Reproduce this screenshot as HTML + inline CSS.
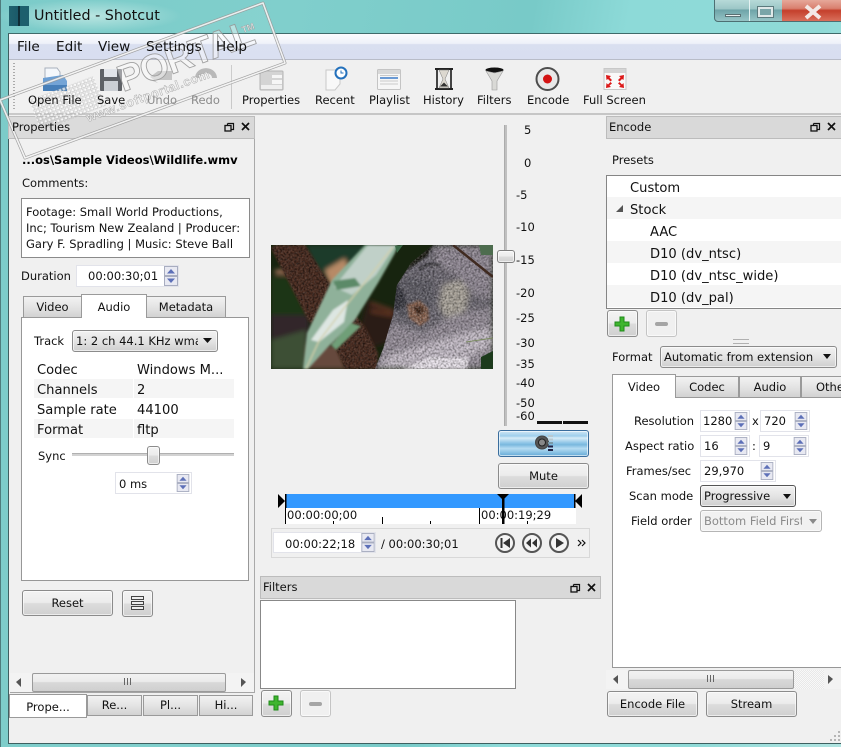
<!DOCTYPE html>
<html><head><meta charset="utf-8"><title>Untitled - Shotcut</title>
<style>
html,body{margin:0;padding:0}
body{width:841px;height:747px;overflow:hidden;position:relative;background:#88d6d3;font:11.5px "DejaVu Sans","Liberation Sans",sans-serif;color:#111}
#glass{position:absolute;left:0;top:0;width:841px;height:747px;background:linear-gradient(100deg,#7ccbc9 0,#80cfcc 30%,#78cac8 55%,#8ddad8 65%,#8fdad7 85%,#b0e4e1 100%)}
#client{position:absolute;left:8px;top:33px;width:840px;height:711px;background:#f0f0f0;border-top:1px solid #3f6b6b;border-left:1px solid #3f5f60;border-bottom:1px solid #3d6060;box-sizing:border-box}
.a,.t,.b,.field,.row{position:absolute}
.t{white-space:nowrap;line-height:16px;height:16px}
.top{z-index:5}
.m{font-size:13.1px}
.g{color:#8a8a8a}
.b{box-sizing:border-box;border:1px solid #8b8b8b;border-radius:3px;background:linear-gradient(#f3f3f3 0,#ececec 48%,#dcdcdc 52%,#d0d0d0 100%);box-shadow:inset 0 0 0 1px rgba(255,255,255,.6);text-align:center}
.off{background:#f0f0f0;border-color:#c4c4c4}
.field{box-sizing:border-box;background:#fff;border:1px solid #e2e3ea}
.dock{position:absolute;box-sizing:border-box;height:23px;background:#d9d9d9;border:1px solid #bcbcbc}
.tab{position:absolute;box-sizing:border-box;border:1px solid #9a9a9a;background:linear-gradient(#f2f2f2,#e4e4e4 50%,#d2d2d2);text-align:center}
.on{background:#fff;border-bottom:none;z-index:2}
.pane{position:absolute;box-sizing:border-box;background:#fff;border:1px solid #979797}
.row{background:#f5f5f5}
.sb{position:absolute;height:19px;background:#f3f3f3}
.th{position:absolute;box-sizing:border-box;height:19px;border:1px solid #9a9a9a;border-radius:2px;background:linear-gradient(#f2f2f2,#ebebeb 45%,#d8d8d8 50%,#cfcfcf)}
svg{position:absolute;overflow:visible}
</style></head><body>
<div id="glass"></div>
<div class="a" style="left:0;top:0;width:1px;height:747px;background:#4f7c7d"></div>
<svg width="0" height="0" style="left:0;top:0"><defs>
<symbol id="spin" viewBox="0 0 14 20"><rect x=".5" y=".5" width="13" height="9" fill="#e8e9f2" stroke="#a8adc0"/><rect x=".5" y="10.500" width="13" height="9" fill="#e8e9f2" stroke="#a8adc0"/><path d="M3 7.500L7 3l4 4.500z" fill="#5d70b8"/><path d="M3 12.500h8l-4 4.500z" fill="#5d70b8"/></symbol>
<symbol id="dock" viewBox="0 0 26 12"><path d="M3.500 2.500h6v6h-2M3.500 2.500v2" fill="none" stroke="#111" stroke-width="1.200"/><rect x="1" y="4.500" width="6" height="5.500" fill="none" stroke="#111" stroke-width="1.300"/><path d="M18 2l7 7M25 2l-7 7" stroke="#111" stroke-width="1.700"/></symbol>
<symbol id="plus" viewBox="0 0 16 16"><path d="M6 1h4v5h5v4h-5v5H6v-5H1V6h5z" fill="#3fb52f" stroke="#1f8a1a"/></symbol>
</defs></svg>

<!-- title bar -->
<div class="a" style="left:0;top:0;height:32px;background:radial-gradient(ellipse at 50% 50%,rgba(225,245,240,.6),rgba(200,240,235,0) 72%);width:180px"></div>
<div class="a" style="left:9px;top:6px;width:20px;height:20px;background:linear-gradient(90deg,#20626f 0,#1b5a69 45%,#0f2d36 45%,#0f2d36 55%,#1d5f6d 55%)"></div>
<div class="t" style="left:34px;top:8px;font-size:14.300px;color:#111">Untitled - Shotcut</div>
<div class="a" style="left:714px;top:-2px;width:140px;height:24px;box-sizing:border-box;border:1px solid #4d6f72;border-radius:0 0 4px 4px;background:linear-gradient(#b9dcda 0,#9cc6c6 45%,#6ea4a8 50%,#96c5c6 100%)"></div>
<div class="a" style="left:749px;top:0;width:1px;height:21px;background:#e5f2f2"></div>
<div class="a" style="left:782px;top:0;width:59px;height:21px;background:linear-gradient(#e6a89a 0,#d9806f 40%,#c43f2b 50%,#d96f5b 100%)"></div>
<div class="a" style="left:725px;top:14px;width:16px;height:3px;background:#e8f0f0;border:1px solid #596f72;box-sizing:border-box"></div>
<div class="a" style="left:758px;top:7px;width:15px;height:10px;box-sizing:border-box;border:2px solid #dfe8e8;outline:1px solid #5c7a7d;background:#7aa5a8"></div>
<svg style="left:804px;top:5px" width="18" height="14"><path d="M2 1l14 12M16 1L2 13" stroke="#f3e9e6" stroke-width="4"/></svg>

<div id="client"></div>
<!-- menu -->
<div class="a" style="left:9px;top:34px;width:832px;height:26px;background:linear-gradient(#fbfcfe 0,#eef1f9 38%,#d9dff0 42%,#d8def0 100%);border-bottom:1px solid #b8bcc8;box-sizing:border-box"></div>
<div class="t top" style="left:17px;top:39px;font-size:13.600px">File</div>
<div class="t top" style="left:56px;top:39px;font-size:13.600px">Edit</div>
<div class="t top" style="left:98px;top:39px;font-size:13.600px">View</div>
<div class="t top" style="left:146px;top:39px;font-size:13.600px">Settings</div>
<div class="t top" style="left:216px;top:39px;font-size:13.600px">Help</div>

<!-- toolbar -->
<div class="a" style="left:13px;top:63px;width:2px;height:48px;background:repeating-linear-gradient(#aaa 0,#aaa 1px,transparent 1px,transparent 3px)"></div>
<div class="a" style="left:231px;top:65px;width:1px;height:44px;background:#c9c9c9"></div>
<div class="a" style="left:9px;top:113px;width:832px;height:2px;background:#c6c6c6"></div>
<div class="t top" style="left:28px;top:92px">Open File</div>
<div class="t top" style="left:97px;top:92px">Save</div>
<div class="t g top" style="left:147px;top:92px">Undo</div>
<div class="t g top" style="left:191px;top:92px">Redo</div>
<div class="t top" style="left:242px;top:92px">Properties</div>
<div class="t" style="left:315px;top:92px">Recent</div>
<div class="t" style="left:369px;top:92px">Playlist</div>
<div class="t" style="left:423px;top:92px">History</div>
<div class="t" style="left:477px;top:92px">Filters</div>
<div class="t" style="left:527px;top:92px">Encode</div>
<div class="t" style="left:583px;top:92px">Full Screen</div>
<!-- toolbar icons -->
<svg style="left:0;top:0" width="841" height="115">
 <path d="M45 68h12l3 4v6H45z" fill="#f4f7fb" stroke="#a8b0bc"/><path d="M43 78l20-3 4 6v10H43z" fill="#6c9fd4"/><path d="M43 85h24v6H43z" fill="#3d78b5"/>
 <rect x="100" y="69" width="22" height="22" fill="#55585e" rx="1"/><rect x="104" y="69" width="13" height="8" fill="#dfe2e8"/><rect x="104" y="81" width="14" height="10" fill="#c8ccd2"/>
 <path d="M150 80h22v-9h-14l-8 6 8 6z" fill="#c2c2c2"/><path d="M195 78a10 9 0 0 1 22 0h-5a6 5 0 0 0-12 0z" fill="#b5b5b5"/>
 <rect x="260" y="71" width="23" height="19" rx="1" fill="#d4d4d4" stroke="#b5b5b5"/><rect x="272" y="75" width="10" height="3" fill="#f6f6f6"/><rect x="272" y="80" width="10" height="4" fill="#f6f6f6"/><rect x="261" y="85" width="21" height="4" fill="#efefef"/>
 <path d="M326 70h14v14l-5 6h-9z" fill="#f8f8f8" stroke="#c8c8c8"/><circle cx="341" cy="73" r="5.500" fill="#fff" stroke="#2471bc" stroke-width="2"/><path d="M341 70.500V73h2.500" fill="none" stroke="#2471bc"/>
 <rect x="377.500" y="69.500" width="23" height="20" rx="1" fill="#f6f6f6" stroke="#c4c4c4"/><rect x="378" y="70" width="22" height="4" fill="#d8d8d8"/><path d="M380 78h18" stroke="#3d7cc8" stroke-width="1.500"/><path d="M380 75.500h18M380 81h18M380 84h18" stroke="#c9c9c9"/>
 <path d="M435 68h18v2h-18zM435 88h18v2h-18z" fill="#222"/><path d="M436 70h2v18h-2zM450 70h2v18h-2z" fill="#444"/><path d="M439 70h10l-4 9 4 9h-10l4-9z" fill="#dcd8d0" stroke="#777" stroke-width=".5"/><path d="M440 86.500h8l-4-4z" fill="#333"/>
 <ellipse cx="494.500" cy="70" rx="9" ry="2.500" fill="#111"/><path d="M486 71l6 10v9h5v-9l6-10-8.500 2z" fill="#d9d9d6" stroke="#9a9a9a" stroke-width=".6"/>
 <circle cx="547.500" cy="79" r="11" fill="#e8e8e8" stroke="#4d4d4d" stroke-width="2"/><circle cx="547.500" cy="79" r="4.500" fill="#d31313"/>
 <rect x="604" y="68.500" width="22" height="21" fill="#f9f9f9" stroke="#c8c8c8"/><rect x="604.500" y="69" width="21" height="4" fill="#d4d4d4"/><path d="M606 75l5 1-1.500 1.500L612 80l-1.500 1.500L608 79l-1.500 1zM624 75l-5 1 1.500 1.500L618 80l1.500 1.500L622 79l1.500 1zM606 88l5-1-1.500-1.500L612 83.500 610.500 82 608 84.500 606.500 83zM624 88l-5-1 1.500-1.500-2.500-2 1.500-1.500 2.500 2.500 1.500-1.500z" fill="#dc1818"/>
</svg>

<!-- Properties panel -->
<div class="a" style="left:254px;top:138px;width:1px;height:555px;background:#a9a9a9"></div>
<div class="dock" style="left:8px;top:116px;width:247px"></div>
<div class="t top" style="left:12px;top:119px">Properties</div>
<svg style="left:224px;top:121px" width="28" height="13"><use href="#dock" width="26" height="12"/></svg>
<div class="t top" style="left:22px;top:152px;font-weight:bold;font-size:11.500px;color:#000">...os\Sample Videos\Wildlife.wmv</div>
<div class="t" style="left:22px;top:175px">Comments:</div>
<div class="pane" style="left:21px;top:198px;width:229px;height:60px;border-color:#8a8a8a"></div>
<div class="t" style="left:26px;top:204px">Footage: Small World Productions,</div>
<div class="t" style="left:26px;top:220px">Inc; Tourism New Zealand | Producer:</div>
<div class="t" style="left:26px;top:236px">Gary F. Spradling | Music: Steve Ball</div>
<div class="t" style="left:21px;top:268px">Duration</div>
<div class="field" style="left:76px;top:265px;width:103px;height:22px"></div>
<div class="t" style="left:88px;top:268px">00:00:30;01</div>
<svg style="left:164px;top:266px" width="14" height="20"><use href="#spin" width="14" height="20"/></svg>

<div class="pane" style="left:21px;top:317px;width:228px;height:264px"></div>
<div class="tab" style="left:23px;top:296px;width:59px;height:22px;line-height:21px">Video</div>
<div class="tab on" style="left:81px;top:294px;width:66px;height:24px;line-height:24px">Audio</div>
<div class="tab" style="left:146px;top:296px;width:80px;height:22px;line-height:21px">Metadata</div>
<div class="t" style="left:34px;top:333px">Track</div>
<div class="b" style="left:72px;top:330px;width:146px;height:22px;background:linear-gradient(#f2f2f2,#e4e4e4 50%,#cfcfcf)"></div>
<div class="t" style="left:76px;top:333px;width:122px;overflow:hidden">1: 2 ch 44.1 KHz wma</div>
<svg style="left:203px;top:338px" width="10" height="6"><path d="M0 0h9l-4.500 5z" fill="#111"/></svg>
<div class="row" style="left:34px;top:379px;width:99px;height:19px"></div><div class="row" style="left:134px;top:379px;width:100px;height:19px"></div>
<div class="row" style="left:34px;top:419px;width:99px;height:19px"></div><div class="row" style="left:134px;top:419px;width:100px;height:19px"></div>
<div class="t m" style="left:37px;top:363px">Codec</div><div class="t m" style="left:137px;top:363px">Windows M...</div>
<div class="t m" style="left:37px;top:383px">Channels</div><div class="t m" style="left:137px;top:383px">2</div>
<div class="t m" style="left:37px;top:403px">Sample rate</div><div class="t m" style="left:137px;top:403px">44100</div>
<div class="t m" style="left:37px;top:423px">Format</div><div class="t m" style="left:137px;top:423px">fltp</div>
<div class="t" style="left:38px;top:448px">Sync</div>
<div class="a" style="left:72px;top:453px;width:162px;height:3px;background:#d2d2d2;border-top:1px solid #b0b0b0;box-sizing:border-box"></div>
<div class="b" style="left:147px;top:446px;width:13px;height:19px"></div>
<div class="field" style="left:115px;top:472px;width:77px;height:22px"></div>
<div class="t" style="left:119px;top:476px">0 ms</div>
<svg style="left:176px;top:474px" width="14" height="18"><use href="#spin" width="14" height="18"/></svg>

<div class="b" style="left:22px;top:590px;width:91px;height:26px;line-height:25px">Reset</div>
<div class="b" style="left:122px;top:590px;width:31px;height:27px"></div>
<svg style="left:131px;top:596px" width="14" height="16"><rect x=".5" y=".5" width="12" height="3" fill="#eee" stroke="#444"/><rect x=".5" y="5.500" width="12" height="3" fill="#eee" stroke="#444"/><rect x=".5" y="10.500" width="12" height="3" fill="#eee" stroke="#444"/></svg>

<div class="sb" style="left:10px;top:673px;width:244px"></div>
<div class="th" style="left:32px;top:673px;width:194px"></div>
<svg style="left:0;top:0" width="300" height="700"><path d="M16 682l5-4v9zM246 682l-5-4v9z" fill="#555"/><path d="M124.500 678v7M127.500 678v7M130.500 678v7" stroke="#666"/></svg>
<div class="a" style="left:10px;top:692px;width:244px;height:1px;background:#a5a5a5"></div>
<div class="tab on" style="left:9px;top:694px;width:78px;height:24px;line-height:24px;border-bottom:1px solid #9a9a9a">Prope...</div>
<div class="tab" style="left:87px;top:695px;width:55px;height:21px;line-height:19px">Re...</div>
<div class="tab" style="left:143px;top:695px;width:55px;height:21px;line-height:19px">Pl...</div>
<div class="tab" style="left:199px;top:695px;width:54px;height:21px;line-height:19px">Hi...</div>

<!-- video frame -->
<svg style="left:271px;top:245px" width="222" height="124" viewBox="0 0 222 124">
<defs>
<clipPath id="c"><rect width="222" height="124"/></clipPath>
<filter id="bl" x="-10%" y="-10%" width="120%" height="120%"><feGaussianBlur stdDeviation="2.500"/></filter>
<filter id="bl2" x="-10%" y="-10%" width="120%" height="120%"><feGaussianBlur stdDeviation="1"/></filter>
<filter id="bl3" x="-10%" y="-10%" width="120%" height="120%"><feGaussianBlur stdDeviation="2.800"/></filter>
<filter id="fur" x="0" y="0" width="100%" height="100%"><feTurbulence type="fractalNoise" baseFrequency=".55" numOctaves="2" seed="4"/><feColorMatrix values="0 0 0 0 1  0 0 0 0 1  0 0 0 0 1  2.200 0 0 0 -.85"/><feGaussianBlur stdDeviation=".35"/></filter>
<filter id="fur2" x="0" y="0" width="100%" height="100%"><feTurbulence type="fractalNoise" baseFrequency=".5" numOctaves="2" seed="9"/><feColorMatrix values="0 0 0 0 0  0 0 0 0 0  0 0 0 0 0  2.200 0 0 0 -.85"/><feGaussianBlur stdDeviation=".35"/></filter>
<clipPath id="kc"><path d="M104 124l8-20 10-34 4-30 14-22 22-18h60v124z"/></clipPath>
<clipPath id="brc"><path d="M0 3L5 0h29l27 42 33 40 13 26-1 16H74L64 102 37 75z"/></clipPath>
</defs>
<g clip-path="url(#c)">
<rect width="222" height="124" fill="#17240f"/>
<g filter="url(#bl)">
<path d="M35 0h70l-30 30-25 10z" fill="#1d3a2a"/>
<path d="M0 32h30l7 43-37 6z" fill="#1a3512"/>
<path d="M0 70h38v54H0z" fill="#30262a"/>
<path d="M0 95l35-10v39H0z" fill="#3c4f36"/>
<path d="M36 100h30l10 24H36z" fill="#66493c"/>
<path d="M3 25l20-3 6 8H5z" fill="#8d6650"/>
<path d="M54 25l20-12 6 18-20 10z" fill="#b78a66"/>
<path d="M96 55l30 10-4 30-40 15z" fill="#2a1a16"/>
<path d="M100 58l22 8M100 66l22 4" stroke="#6b3a28" stroke-width="2.500"/>
</g>
<path d="M0 3L5 0h29l27 42 33 40 13 26-1 16H74L64 102 37 75z" fill="#4e2e20" filter="url(#bl2)"/>
<rect width="222" height="124" filter="url(#fur2)" clip-path="url(#brc)" opacity=".65"/>
<rect width="222" height="124" filter="url(#fur)" clip-path="url(#brc)" opacity=".12"/>
<g clip-path="url(#kc)">
<g filter="url(#bl3)">
<rect x="100" width="122" height="124" fill="#6a6670"/>
<path d="M165 0h57v55l-18-6-20-20-20-10z" fill="#8e8692"/>
<path d="M172 40l18-5 8 12-4 20-18 6-8-12z" fill="#a8a298"/>
<path d="M124 40l14-8 24 4 2 22-12 12-24 4-8-16z" fill="#5c5a64"/>
<path d="M104 100l18-22 30 10 30-18 40-8v62H104z" fill="#938b96"/>
<path d="M108 124l10-14 34-10 40-12 30-6v18l-38 20-24 4z" fill="#c2bac5"/>
</g>
<g filter="url(#bl2)">
<path d="M120 0h42l-6 11-20 14-10 10-6-8z" fill="#12120e"/>
<path d="M116 44l12-4 5 10 3 10-9 6-12-10z" fill="#36363d"/>
<path d="M136 60l12-5 9 8 1 12-9 6-11-8z" fill="#86604e"/>
<path d="M142 62l8-2 4 6-7 5z" fill="#45291f"/>
<path d="M132 124l28-12 38 1-2 11z" fill="#e8e2ea"/>
<path d="M148 25c6-6 14-7 22-5" stroke="#2a2a2d" stroke-width="2" fill="none"/>
</g>
</g>
<rect width="222" height="124" filter="url(#fur)" clip-path="url(#kc)" opacity=".32"/>
<rect width="222" height="124" filter="url(#fur2)" clip-path="url(#kc)" opacity=".45"/>
<path d="M182 0l40 32" stroke="#3f2a20" stroke-width="2.500"/>
<path d="M208 0h14v10h-12z" fill="#4d6c4e"/>
<path d="M210 112l12-6v18h-12z" fill="#1c3a1c"/>
<path d="M195 97l27-4" stroke="#7a8a60"/>
<g filter="url(#bl2)">
<path d="M94 0h33l-3 8-17 30-23 37-27 27-20 22h-5l4-36 25-53z" fill="#8fb19a"/>
<path d="M97 0h28l-20 30-24 20-18-8z" fill="#c0d0c8"/>
<path d="M40 95l22-30 15-10-4 22-25 20z" fill="#dde6e2"/>
<path d="M62 36l22-3 6 8-24 4z" fill="#5b8a68"/>
<path d="M35 124l13-28 25-33 22-27 27-34" stroke="#d2cfa8" stroke-width="1.300" fill="none"/>
<path d="M60 100l20-22 10 3-25 24z" fill="#6f9f78"/>
</g>
<path d="M124 1l8-1-6 8z" fill="#3c6a48"/>
</g>
</svg>

<!-- volume slider -->
<div class="a" style="left:504px;top:125px;width:3px;height:301px;background:#c0c0c0;border-left:1px solid #ababab;box-sizing:border-box"></div>
<div class="b" style="left:497px;top:250px;width:18px;height:13px;border-color:#7f7f7f"></div>
<div class="t" style="left:524px;top:122px">5</div>
<div class="t" style="left:524px;top:155px">0</div>
<div class="t" style="left:516px;top:187px">-5</div>
<div class="t" style="left:516px;top:219px">-10</div>
<div class="t" style="left:516px;top:252px">-15</div>
<div class="t" style="left:516px;top:285px">-20</div>
<div class="t" style="left:516px;top:310px">-25</div>
<div class="t" style="left:516px;top:335px">-30</div>
<div class="t" style="left:516px;top:356px">-35</div>
<div class="t" style="left:516px;top:375px">-40</div>
<div class="t" style="left:516px;top:395px">-50</div>
<div class="t" style="left:516px;top:408px">-60</div>
<div class="a" style="left:537px;top:421px;width:25px;height:3px;background:#111"></div>
<div class="a" style="left:563px;top:421px;width:25px;height:3px;background:#111"></div>

<div class="b" style="left:498px;top:430px;width:91px;height:27px;border-color:#3a6d9d;background:linear-gradient(#cfe6f5 0,#9fcfec 20%,#d7ecf7 28%,#8cc4e6 48%,#7ab8de 55%,#b5dcf2 70%,#62a9d6 100%)"></div>
<svg style="left:533px;top:433px" width="22" height="20"><circle cx="9" cy="9.500" r="6.500" fill="#555" stroke="#444"/><circle cx="9" cy="9.500" r="3.500" fill="#888" stroke="#222"/><path d="M15 2h5v2h-5zM15 5.500h5v2h-5z" fill="#b8c8d0"/><path d="M15 9h5v2h-5z" fill="#7a9aa8"/><path d="M15 12.500h5v2h-5zM15 16h5v2h-5z" fill="#224"/></svg>
<div class="b" style="left:498px;top:463px;width:91px;height:26px;line-height:25px">Mute</div>

<!-- timeline -->
<div class="a" style="left:285px;top:494px;width:290px;height:14px;background:#3399ff"></div>
<div class="a" style="left:285px;top:508px;width:291px;height:16px;background:#fff"></div>
<svg style="left:0;top:0" width="841" height="560">
<path d="M278 494l7 7-7 7zM582 494l-7 7 7 7z" fill="#000"/>
<path d="M285 494h1.500v14H285zM574 494h1.500v14H574z" fill="#000"/>
<path d="M285.500 508v16M479.500 508v16M333.500 521v3M382.500 517v7M430.500 521v3M527.500 521v3" stroke="#000"/>
<path d="M497 494h12l-6 6z" fill="#000"/>
</svg>
<div class="t" style="left:287px;top:507px;font-size:11.500px">00:00:00;00</div>
<div class="t" style="left:481px;top:507px;font-size:11.500px">00:00:19;29</div>
<svg style="left:0;top:0" width="841" height="560"><rect x="502" y="494" width="2.500" height="30" fill="#000"/></svg>

<div class="a" style="left:271px;top:528px;width:319px;height:30px;box-sizing:border-box;border:1px solid #d8d8d8;background:#f0f0f0"></div>
<div class="field" style="left:273px;top:532px;width:103px;height:21px"></div>
<div class="t" style="left:285px;top:536px">00:00:22;18</div>
<svg style="left:361px;top:533px" width="14" height="19"><use href="#spin" width="14" height="19"/></svg>
<div class="t" style="left:381px;top:536px">/ 00:00:30;01</div>
<svg style="left:0;top:0" width="841" height="560">
<g fill="#f4f4f4" stroke="#555" stroke-width="2"><circle cx="505" cy="543" r="9"/><circle cx="532" cy="543" r="9"/><circle cx="559" cy="543" r="9"/></g>
<path d="M500.500 538h2v10h-2zM510 538v10l-7-5zM531 538.500v9l-5-4.500zM537 538.500v9l-5-4.500zM556 538v10l8-5z" fill="#333"/>
<path d="M578 540l3 3-3 3M582 540l3 3-3 3" fill="none" stroke="#111" stroke-width="1.200"/>
</svg>

<!-- Filters -->
<div class="dock" style="left:260px;top:576px;width:341px"></div>
<div class="t" style="left:263px;top:579px">Filters</div>
<svg style="left:570px;top:582px" width="28" height="13"><use href="#dock" width="26" height="12"/></svg>
<div class="pane" style="left:260px;top:600px;width:256px;height:89px;border-color:#888"></div>
<div class="b" style="left:261px;top:690px;width:31px;height:27px"></div>
<svg style="left:268px;top:695px" width="16" height="16"><use href="#plus" width="16" height="16"/></svg>
<div class="b off" style="left:300px;top:690px;width:31px;height:27px"></div>
<div class="a" style="left:309px;top:702px;width:13px;height:4px;background:#a5a5a5;border-radius:2px"></div>

<!-- Encode -->
<div class="dock" style="left:606px;top:116px;width:240px"></div>
<div class="t" style="left:609px;top:119px">Encode</div>
<svg style="left:810px;top:121px" width="28" height="13"><use href="#dock" width="26" height="12"/></svg>
<div class="t" style="left:612px;top:152px">Presets</div>
<div class="pane" style="left:606px;top:175px;width:240px;height:134px;border-color:#858585"></div>
<div class="row" style="left:607px;top:197px;width:234px;height:22px"></div>
<div class="row" style="left:607px;top:241px;width:234px;height:22px"></div>
<div class="row" style="left:607px;top:285px;width:234px;height:22px"></div>
<svg style="left:615px;top:204px" width="10" height="10"><path d="M8 1v7H1z" fill="#555"/></svg>
<div class="t m" style="left:630px;top:181px">Custom</div>
<div class="t m" style="left:630px;top:203px">Stock</div>
<div class="t m" style="left:650px;top:225px">AAC</div>
<div class="t m" style="left:650px;top:247px">D10 (dv_ntsc)</div>
<div class="t m" style="left:650px;top:269px">D10 (dv_ntsc_wide)</div>
<div class="t m" style="left:650px;top:291px">D10 (dv_pal)</div>
<div class="b" style="left:607px;top:310px;width:31px;height:27px"></div>
<svg style="left:614px;top:316px" width="16" height="16"><use href="#plus" width="16" height="16"/></svg>
<div class="b off" style="left:646px;top:310px;width:31px;height:27px"></div>
<div class="a" style="left:655px;top:322px;width:13px;height:4px;background:#a5a5a5;border-radius:2px"></div>
<div class="a" style="left:733px;top:339px;width:16px;height:3px;border-top:1px solid #b0b0b0;border-bottom:1px solid #b0b0b0"></div>
<div class="t" style="left:612px;top:349px">Format</div>
<div class="b" style="left:660px;top:346px;width:177px;height:22px;background:linear-gradient(#f2f2f2,#e4e4e4 50%,#cfcfcf)"></div>
<div class="t" style="left:664px;top:349px">Automatic from extension</div>
<svg style="left:823px;top:354px" width="10" height="6"><path d="M0 0h8l-4 5z" fill="#111"/></svg>

<div class="pane" style="left:612px;top:397px;width:234px;height:271px"></div>
<div class="tab on" style="left:612px;top:374px;width:64px;height:24px;line-height:24px">Video</div>
<div class="tab" style="left:675px;top:376px;width:64px;height:22px;line-height:21px">Codec</div>
<div class="tab" style="left:739px;top:376px;width:62px;height:22px;line-height:21px">Audio</div>
<div class="tab" style="left:801px;top:376px;width:60px;height:22px;line-height:21px;text-align:left;padding-left:14px">Other</div>
<div class="t" style="left:634px;top:413px">Resolution</div>
<div class="t" style="left:625px;top:438px">Aspect ratio</div>
<div class="t" style="left:626px;top:463px">Frames/sec</div>
<div class="t" style="left:629px;top:488px">Scan mode</div>
<div class="t" style="left:631px;top:513px">Field order</div>
<div class="field" style="left:700px;top:410px;width:50px;height:22px"></div>
<div class="t" style="left:703px;top:413px">1280</div>
<svg style="left:734px;top:412px" width="14" height="18"><use href="#spin" width="14" height="18"/></svg>
<div class="t" style="left:752px;top:413px">x</div>
<div class="field" style="left:760px;top:410px;width:50px;height:22px"></div>
<div class="t" style="left:764px;top:413px">720</div>
<svg style="left:794px;top:412px" width="14" height="18"><use href="#spin" width="14" height="18"/></svg>
<div class="field" style="left:700px;top:435px;width:50px;height:22px"></div>
<div class="t" style="left:704px;top:438px">16</div>
<svg style="left:734px;top:437px" width="14" height="18"><use href="#spin" width="14" height="18"/></svg>
<div class="t" style="left:752px;top:438px">:</div>
<div class="field" style="left:759px;top:435px;width:50px;height:22px"></div>
<div class="t" style="left:763px;top:438px">9</div>
<svg style="left:793px;top:437px" width="14" height="18"><use href="#spin" width="14" height="18"/></svg>
<div class="field" style="left:700px;top:460px;width:76px;height:22px"></div>
<div class="t" style="left:704px;top:463px">29,970</div>
<svg style="left:760px;top:462px" width="14" height="18"><use href="#spin" width="14" height="18"/></svg>
<div class="b" style="left:700px;top:485px;width:96px;height:22px;border-color:#555;background:linear-gradient(#f2f2f2,#e4e4e4 50%,#cfcfcf)"></div>
<div class="t" style="left:704px;top:488px">Progressive</div>
<svg style="left:783px;top:494px" width="10" height="6"><path d="M0 0h8l-4 5z" fill="#111"/></svg>
<div class="b" style="left:700px;top:510px;width:122px;height:22px;background:#f1f1f1;border-color:#b5b5b5"></div>
<div class="t" style="left:704px;top:513px;width:98px;overflow:hidden;color:#8a8a8a">Bottom Field First</div>
<svg style="left:809px;top:519px" width="10" height="6"><path d="M0 0h8l-4 5z" fill="#8a8a8a"/></svg>

<div class="sb" style="left:606px;top:670px;width:235px"></div>
<div class="th" style="left:628px;top:670px;width:166px"></div>
<div class="a" style="left:794px;top:670px;width:30px;height:19px;background:repeating-conic-gradient(#e8e8e8 0 25%,#f8f8f8 0 50%) 0 0/2px 2px"></div>
<svg style="left:0;top:0" width="841" height="747"><path d="M613 679l5-4v9zM833 679l-5-4v9z" fill="#555"/><path d="M707.500 675v7M710.500 675v7M713.500 675v7" stroke="#666"/>
<path d="M838 731h2v2h-2zM834 735h2v2h-2zM838 735h2v2h-2zM830 739h2v2h-2zM834 739h2v2h-2zM838 739h2v2h-2z" fill="#b5b5b5"/></svg>
<div class="b" style="left:607px;top:691px;width:91px;height:26px;line-height:25px">Encode File</div>
<div class="b" style="left:706px;top:691px;width:91px;height:26px;line-height:25px">Stream</div>

<!-- watermark -->
<svg style="left:0;top:0;z-index:3;opacity:.9" width="320" height="170" viewBox="0 0 320 170">
<defs><pattern id="dots" width="4" height="4" patternUnits="userSpaceOnUse" patternTransform="rotate(-20)"><rect width="3" height="3" fill="#fff" stroke="#999" stroke-width=".5"/></pattern></defs>
<path d="M0 100L263 3l22 60L25 158z" fill="rgba(255,255,255,.06)" stroke="#9a9a9a" stroke-width="3" stroke-linejoin="round"/>
<path d="M0 100L263 3l22 60L25 158z" fill="none" stroke="#f4f4f4" stroke-width="1.600" stroke-linejoin="round"/>
<path d="M29 100l64-24 13 30-65 25z" fill="url(#dots)" opacity=".8"/>
<text transform="translate(123 92) rotate(-20)" font-family="Liberation Sans" font-weight="bold" font-size="37" fill="rgba(255,255,255,.45)" stroke="#999" stroke-width=".9" textLength="143">PORTAL</text>
<text transform="translate(88 122) rotate(-20)" font-family="Liberation Sans" font-weight="bold" font-size="12.500" fill="#f2f2f2" stroke="#999" stroke-width=".4" textLength="130">www.softportal.com</text>
<text transform="translate(243 33) rotate(-20)" font-family="Liberation Sans" font-weight="bold" font-size="9" fill="#eee" stroke="#999" stroke-width=".4">TM</text>
</svg>
</body></html>
